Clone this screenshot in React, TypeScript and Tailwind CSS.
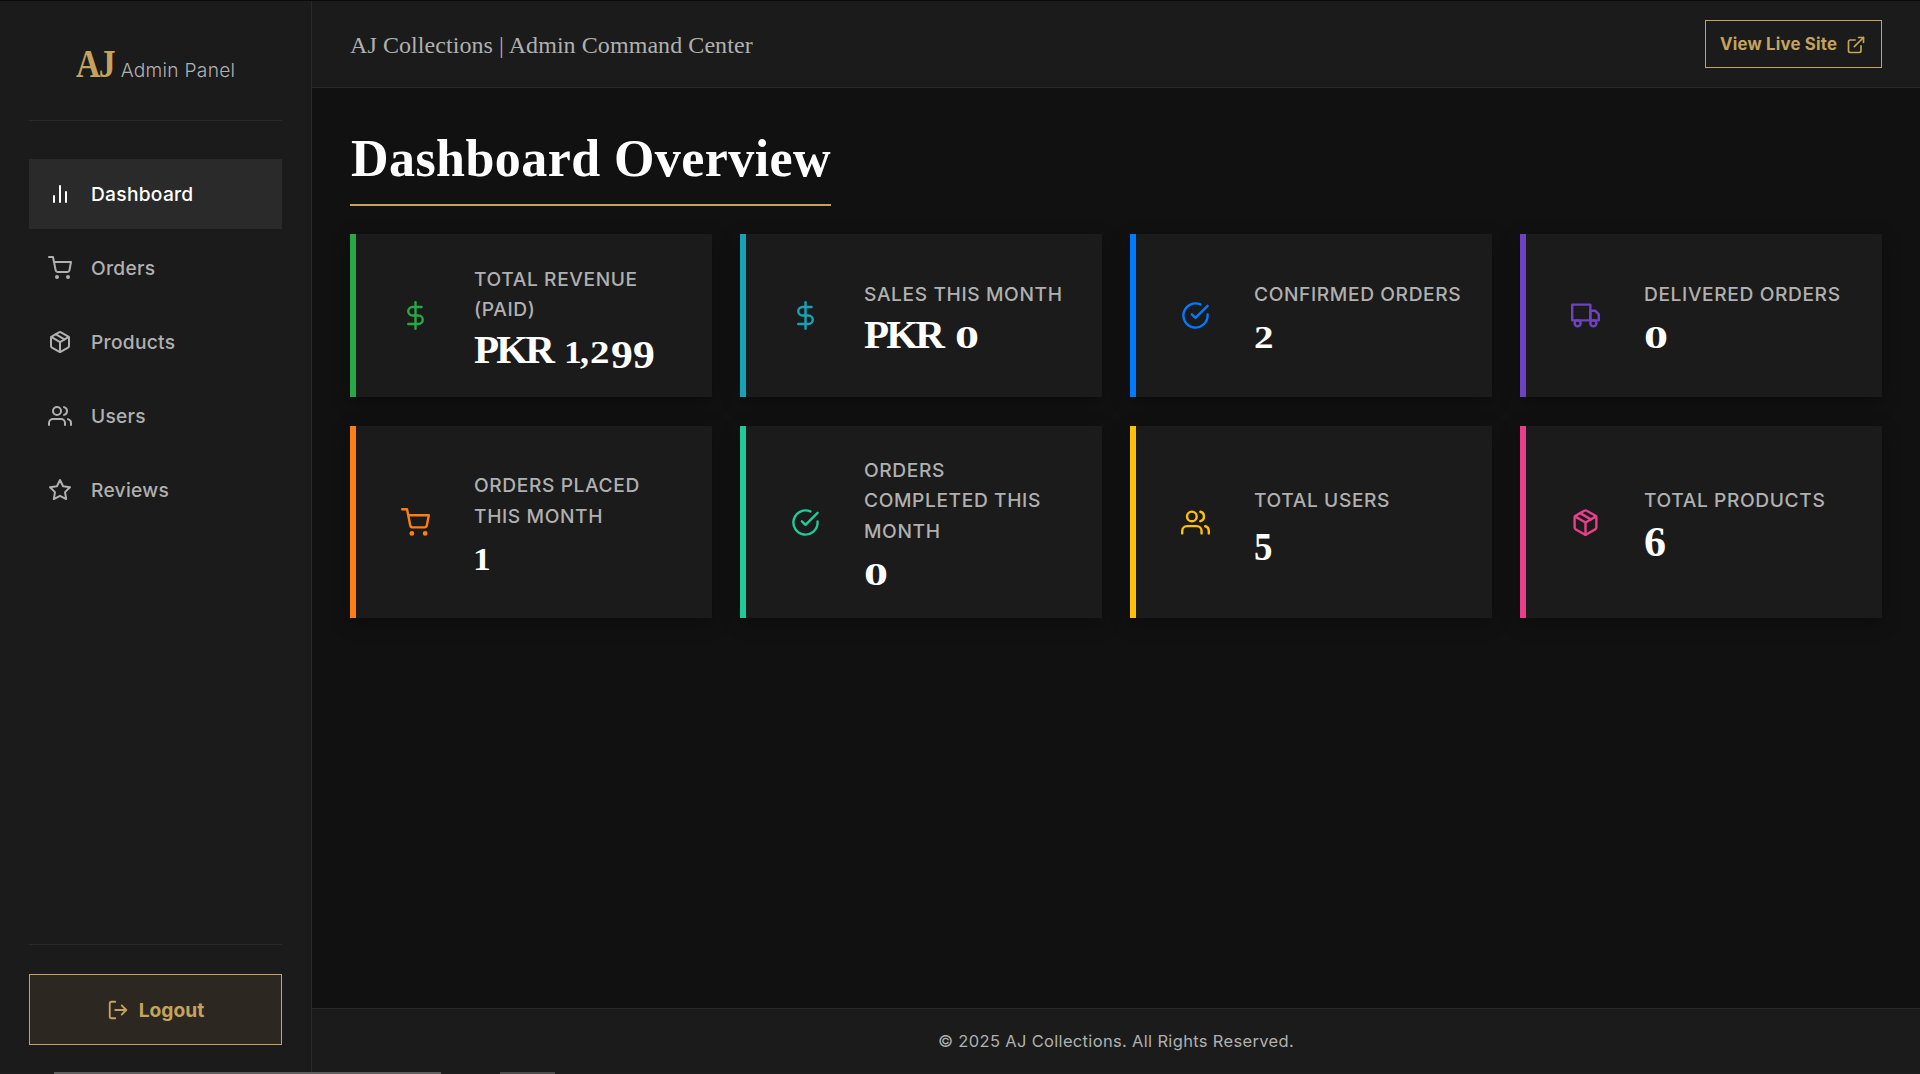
import type { IconType } from "react-icons";
import {
  FiBarChart2,
  FiCheckCircle,
  FiDollarSign,
  FiExternalLink,
  FiLogOut,
  FiPackage,
  FiShoppingCart,
  FiStar,
  FiTruck,
  FiUsers,
} from "react-icons/fi";

const nav: { label: string; Icon: IconType; active?: boolean }[] = [
  { label: "Dashboard", Icon: FiBarChart2, active: true },
  { label: "Orders", Icon: FiShoppingCart },
  { label: "Products", Icon: FiPackage },
  { label: "Users", Icon: FiUsers },
  { label: "Reviews", Icon: FiStar },
];

type Stat = { label: string; value: string; Icon: IconType; border: string; color: string };

const stats: Stat[] = [
  { label: "Total Revenue (Paid)", value: "PKR 1,299", Icon: FiDollarSign, border: "border-[#28a745]", color: "text-[#28a745]" },
  { label: "Sales This Month", value: "PKR 0", Icon: FiDollarSign, border: "border-[#17a2b8]", color: "text-[#17a2b8]" },
  { label: "Confirmed Orders", value: "2", Icon: FiCheckCircle, border: "border-[#007bff]", color: "text-[#007bff]" },
  { label: "Delivered Orders", value: "0", Icon: FiTruck, border: "border-[#6f42c1]", color: "text-[#6f42c1]" },
  { label: "Orders Placed This Month", value: "1", Icon: FiShoppingCart, border: "border-[#fd7e14]", color: "text-[#fd7e14]" },
  { label: "Orders Completed This Month", value: "0", Icon: FiCheckCircle, border: "border-[#20c997]", color: "text-[#20c997]" },
  { label: "Total Users", value: "5", Icon: FiUsers, border: "border-[#ffc107]", color: "text-[#ffc107]" },
  { label: "Total Products", value: "6", Icon: FiPackage, border: "border-[#e83e8c]", color: "text-[#e83e8c]" },
];

// Old-style figures: 0-2 sit at x-height, 5 and 9 hang below the baseline.
const figures: Record<string, string> = {
  "0": "w-[24px] text-[31px] scale-x-[1.55]",
  "1": "-ml-[1px] w-[16px] text-[31px] scale-x-[1.15]",
  "2": "w-[21px] text-[32px] scale-x-[1.22]",
  "5": "w-[19px] text-[41px] scale-x-[0.9] translate-y-[5px]",
  "6": "w-[22px] text-[42px] scale-x-[1.05] translate-y-px",
  "9": "w-[22px] text-[39px] scale-x-[1.12] translate-y-[5px]",
  ",": "w-[10px] text-[36px]",
};

function Value({ text }: { text: string }) {
  const [prefix, figs] = text.includes(" ") ? text.split(" ") : ["", text];
  return (
    <p className="-mb-[9px] h-[51px] whitespace-pre font-['Liberation_Serif',serif] text-[41px] font-bold leading-[50px] text-white">
      {prefix && <span className="inline-block w-[91px] tracking-[-2.8px]">{prefix + " "}</span>}
      {figs.split("").map((c, i) => (
        <span key={i} className={`inline-block origin-left leading-none ${figures[c] ?? ""}`}>
          {c}
        </span>
      ))}
    </p>
  );
}

function StatCard({ label, value, Icon, border, color }: Stat) {
  return (
    <div className={`flex items-center border-l-6 bg-[#1b1b1b] pl-[45px] pr-[29px] shadow-[0_5px_18px_rgba(0,0,0,0.3)] ${border}`}>
      <Icon className={`size-[29px] shrink-0 ${color}`} />
      <div className="ml-[44px] flex-1 pb-px">
        <p className="text-[19.2px] font-medium uppercase leading-[30.4px] tracking-[0.6px] text-[#b0b0b0]">{label}</p>
        <Value text={value} />
      </div>
    </div>
  );
}

function Sidebar() {
  return (
    <aside className="flex w-[312px] shrink-0 flex-col border-r border-[#2a2a2a] bg-[#1b1b1b] px-[29px]">
      <div className="flex h-[120px] items-baseline justify-center border-b border-[#2a2a2a] pt-[37px]">
        <span className="w-[45px] origin-left scale-x-[0.82] whitespace-nowrap font-['Liberation_Serif',serif] text-[41px] font-bold leading-[50px] tracking-[-2px] text-[#c5a35d]">
          AJ
        </span>
        <span className="text-[19.2px] font-light tracking-[0.27px] text-[#b0b0b0]">Admin Panel</span>
      </div>
      <nav className="mt-[38px] flex flex-1 flex-col gap-1">
        {nav.map(({ label, Icon, active }) => (
          <a
            key={label}
            className={`flex h-[70px] items-center gap-[19px] pl-[19px] text-[19.2px] font-medium tracking-[0.27px] ${
              active ? "bg-[#2a2a2a] text-white" : "text-[#b0b0b0]"
            }`}
          >
            <Icon className="size-6" />
            {label}
          </a>
        ))}
      </nav>
      <div className="border-t border-[#2a2a2a] pb-[27px] pt-[29px]">
        <button className="flex h-[71px] w-full items-center justify-center gap-[10px] border border-[#c5a35d] bg-[#2c2821] pt-px text-[19.2px] font-bold text-[#c5a35d]">
          <FiLogOut className="size-[22px]" />
          Logout
        </button>
      </div>
    </aside>
  );
}

export default function App() {
  return (
    <div className="flex h-[1074px] w-[1920px] flex-col overflow-hidden border-t border-[#0b0b0b] bg-[#111111] font-['Inter',sans-serif]">
      <div className="flex min-h-0 flex-1">
        <Sidebar />
        <div className="flex flex-1 flex-col">
          <header className="flex h-[87px] items-center justify-between border-b border-[#2a2a2a] bg-[#1b1b1b] px-[38px]">
            <p className="pt-[2px] font-['Liberation_Serif',serif] text-[24px] leading-8 tracking-[0.07px] text-[#b0b0b0]">
              AJ Collections | Admin Command Center
            </p>
            <a className="flex h-[48px] w-[177px] items-center gap-[9px] border border-[#c5a35d] pl-[14px] pt-px text-[16.8px] font-bold tracking-[0.2px] text-[#c5a35d]">
              <span className="w-[117px] whitespace-nowrap">View Live Site</span>
              <FiExternalLink className="size-5" />
            </a>
          </header>
          <main className="flex-1 px-[38px] pt-[38px]">
            <h1 className="h-[80px] w-[481px] whitespace-nowrap border-b-2 border-[#c5a35d] pl-px font-['Liberation_Serif',serif] text-[52px] font-bold leading-[65px] tracking-[0.43px] text-white">
              Dashboard Overview
            </h1>
            <section className="mt-[28px] grid grid-cols-4 grid-rows-[163px_192px] gap-x-[28px] gap-y-[29px]">
              {stats.map((s) => (
                <StatCard key={s.label} {...s} />
              ))}
            </section>
          </main>
          <footer className="flex h-[64px] items-center justify-center border-t border-[#2a2a2a] bg-[#1b1b1b] pt-[2px] text-[16.5px] tracking-[0.33px] text-[#b0b0b0]">
            © 2025 AJ Collections. All Rights Reserved.
          </footer>
        </div>
      </div>
      <div className="flex h-[2px] bg-[#1d1d1d]">
        <div className="ml-[54px] w-[387px] bg-[#5f5f5f]" />
        <div className="ml-[59px] w-[55px] bg-[#4c4c4c]" />
      </div>
    </div>
  );
}
